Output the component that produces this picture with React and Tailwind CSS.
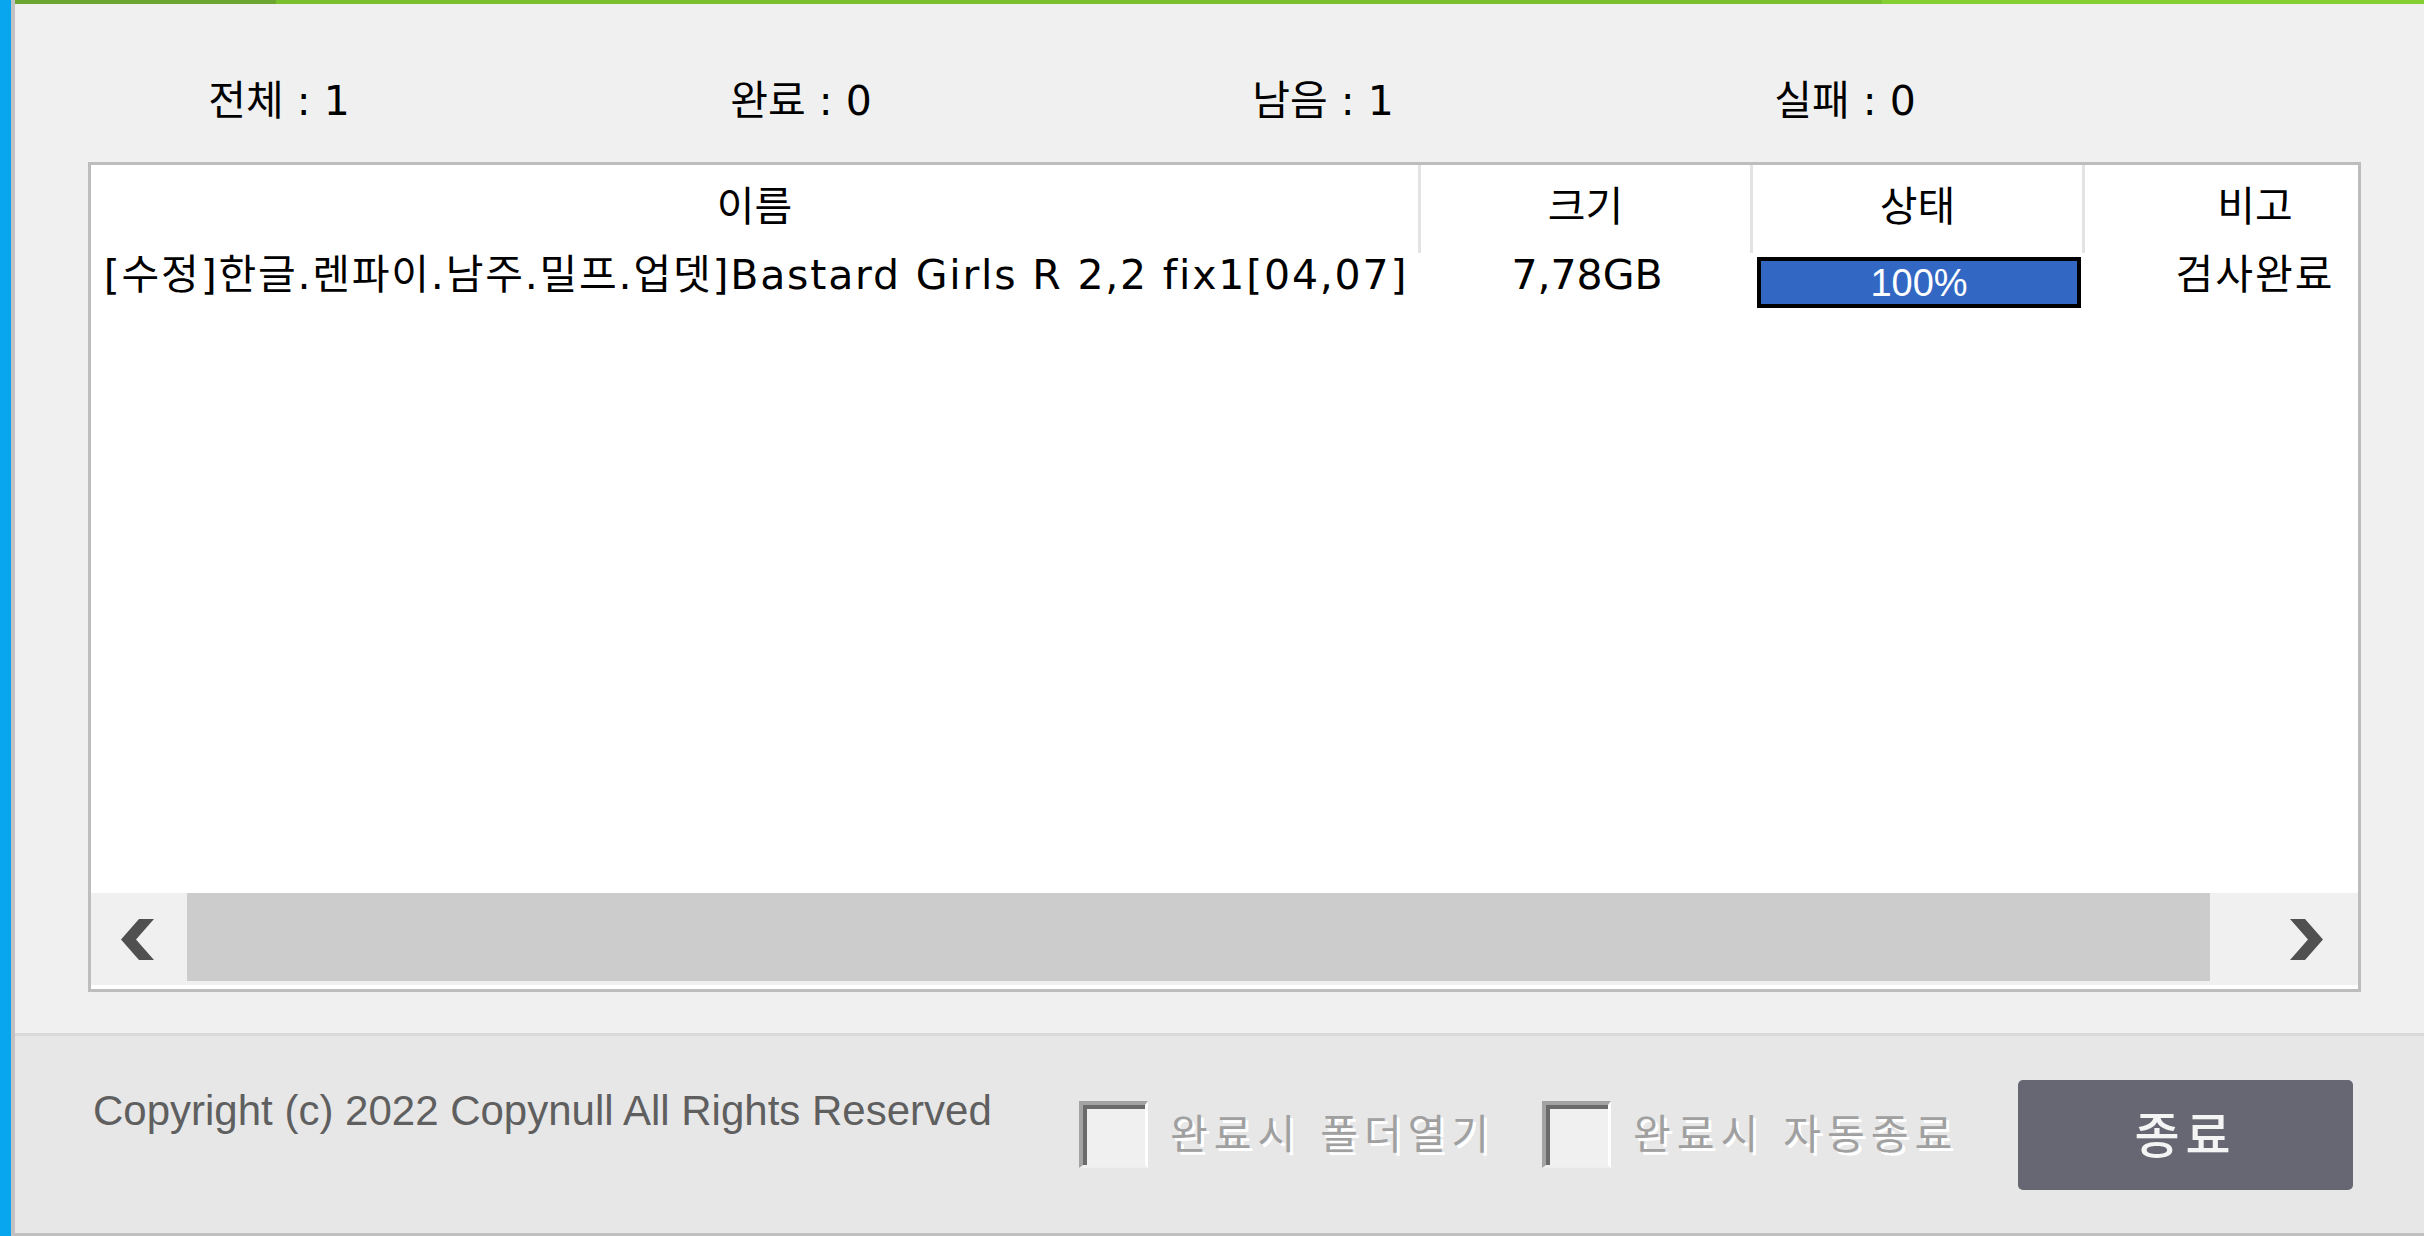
const KO = "font-['DejaVu_Sans','Noto_Sans_CJK_KR',sans-serif]";

const stats = [
  ['전체', 1],
  ['완료', 0],
  ['남음', 1],
  ['실패', 0],
];

function Chevron({ dir }) {
  const pts =
    dir === 'left'
      ? '33,0 18,0 0,20.5 18,41 33,41 15,20.5'
      : '0,0 15,0 33,20.5 15,41 0,41 18,20.5';
  return (
    <svg width="34" height="41" viewBox="0 0 34 41">
      <polygon points={pts} fill="#505050" />
    </svg>
  );
}

function Check({ label }) {
  return (
    <div className="flex items-center">
      <div className="w-[69px] h-[67px] shrink-0 border-t-[4px] border-l-[4px] border-r-[3px] border-b-[3px] border-t-[#a3a3a3] border-l-[#a3a3a3] border-r-white border-b-[#efefef]">
        <div className="w-full h-full border-t-[4px] border-l-[4px] border-[#6b6b6b] bg-[#f0f0f0]" />
      </div>
      <span className={`ml-[22px] text-[41px] leading-[48px] tracking-[6px] whitespace-nowrap text-[#a0a0a0] [text-shadow:3px_3px_0_#ffffff] ${KO}`}>
        {label}
      </span>
    </div>
  );
}

export default function App() {
  return (
    <div className="w-[2424px] h-[1236px] flex overflow-hidden bg-[#f0f0f0]">
      <div className="w-[11px] shrink-0 bg-[#08a6ef]" />
      <div className="w-[4px] shrink-0 bg-[#c2c2c2]" />

      <div className="flex-1 flex flex-col min-w-0">
        {/* progress strip */}
        <div className="h-[4px] flex shrink-0">
          <div className="w-[261px] bg-[#6ca530]" />
          <div className="w-[1606px] bg-[#7abf2c]" />
          <div className="flex-1 bg-[#84cf32]" />
        </div>

        <div className="flex-1 flex flex-col">
          {/* counters */}
          <div className={`h-[158px] pl-[3px] pt-[75px] flex text-[41px] leading-[44px] text-black ${KO}`}>
            {stats.map(([k, v]) => (
              <div key={k} className="w-[522px] text-center whitespace-pre">
                {k} : {v}
              </div>
            ))}
          </div>

          {/* list */}
          <div className="ml-[73px] w-[2273px] h-[830px] border-[3px] border-[#bdbdbd] bg-white flex flex-col overflow-hidden">
            <div className={`flex h-[88px] shrink-0 text-[41px] leading-[44px] text-black ${KO}`}>
              <div className="w-[1330px] shrink-0 border-r-[3px] border-[#e3e3e3] flex justify-center pt-[20px]">이름</div>
              <div className="w-[332px] shrink-0 border-r-[3px] border-[#e3e3e3] flex justify-center pt-[20px]">크기</div>
              <div className="w-[332px] shrink-0 border-r-[3px] border-[#e3e3e3] flex justify-center pt-[20px]">상태</div>
              <div className="w-[340px] shrink-0 flex justify-center pt-[20px]">비고</div>
            </div>

            <div className={`flex h-[60px] shrink-0 text-[41px] leading-[44px] text-black ${KO}`}>
              <div className="w-[1330px] shrink-0 flex justify-center whitespace-nowrap tracking-[1.8px]">
                [수정]한글.렌파이.남주.밀프.업뎃]Bastard Girls R 2,2 fix1[04,07]
              </div>
              <div className="w-[332px] shrink-0 flex justify-center whitespace-nowrap">7,78GB</div>
              <div className="w-[332px] shrink-0 pl-[4px] pt-[4px]">
                <div className="w-[324px] h-[51px] border-[4px] border-black bg-[#3268c4] flex items-center justify-center text-white text-[38px] leading-none font-['Liberation_Sans',sans-serif]">
                  100%
                </div>
              </div>
              <div className="w-[340px] shrink-0 flex justify-center whitespace-nowrap tracking-[2px]">검사완료</div>
            </div>

            <div className="flex-1" />

            {/* horizontal scrollbar */}
            <div className="h-[92px] shrink-0 flex bg-[#f0f0f0]">
              <div className="w-[96px] shrink-0 flex items-center justify-center pr-[2px]">
                <Chevron dir="left" />
              </div>
              <div className="w-[2023px] shrink-0 h-[88px] bg-[#cccccc]" />
              <div className="flex-1 flex items-center justify-end pr-[34px]">
                <Chevron dir="right" />
              </div>
            </div>
            <div className="h-[4px] shrink-0 bg-white" />
          </div>

          <div className="flex-1" />
        </div>

        {/* footer */}
        <div className="h-[203px] shrink-0 border-t-[3px] border-b-[3px] border-t-[#dadada] border-b-[#c0c0c0] bg-[#e7e7e7] flex items-center pl-[78px] pr-[71px]">
          <div className="w-[986px] shrink-0 self-start mt-[51px] text-[42px] leading-[48px] text-[#5f5f5f] whitespace-nowrap font-['Liberation_Sans',sans-serif]">
            Copyright (c) 2022 Copynull All Rights Reserved
          </div>
          <Check label="완료시 폴더열기" />
          <div className="ml-[47px]">
            <Check label="완료시 자동종료" />
          </div>
          <div className="ml-auto w-[335px] h-[110px] rounded-[5px] bg-[#676773] flex items-center justify-center">
            <span className="text-[49px] leading-none tracking-[6px] font-medium text-[#f4f4f4] -mt-[6px] font-['Noto_Sans_CJK_KR',sans-serif]">
              종료
            </span>
          </div>
        </div>
      </div>
    </div>
  );
}
